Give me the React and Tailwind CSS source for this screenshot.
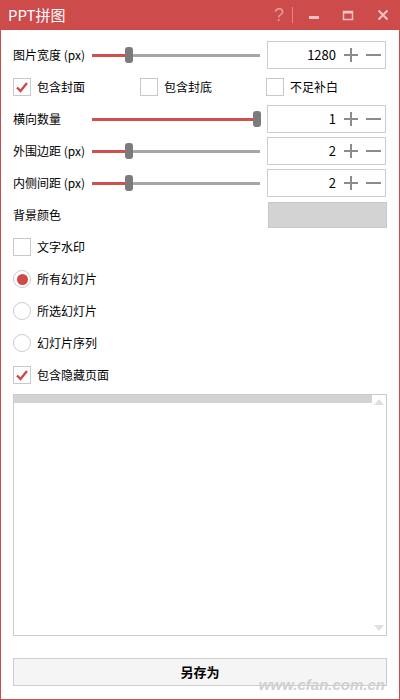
import React from "react";

function Slider({ pct }) {
  return (
    <div className="relative h-[18px] w-[168px] flex items-center">
      <div className="h-[3px] bg-[#d05050]" style={{ width: `${pct}%` }} />
      <div className="h-[3px] flex-1 bg-[#a6a6a6]" />
      <div
        className="absolute top-[1px] h-[16px] w-[8px] rounded-[3px] bg-[#7b7b7b]"
        style={{ left: `calc(${pct}% - 4px)` }}
      />
    </div>
  );
}

function NumBox({ value }) {
  return (
    <div className="flex h-[28px] w-[119px] items-center border border-[#cccccc] bg-white">
      <span className="flex-1 pr-[7px] text-right text-[13px] text-black">{value}</span>
      <svg width="16" height="16" viewBox="0 0 16 16" className="mr-[6px]">
        <rect x="7" y="1" width="2" height="14" fill="#8c8c8c" />
        <rect x="1" y="7" width="14" height="2" fill="#8c8c8c" />
      </svg>
      <svg width="16" height="16" viewBox="0 0 16 16" className="mr-[4px]">
        <rect x="1" y="7" width="15" height="2" fill="#8c8c8c" />
      </svg>
    </div>
  );
}

function SliderRow({ label, pct, value }) {
  return (
    <div className="flex h-[32px] items-center">
      <div className="w-[79px] text-[12px] text-black whitespace-nowrap">{label}</div>
      <Slider pct={pct} />
      <div className="ml-[7px]">
        <NumBox value={value} />
      </div>
    </div>
  );
}

function Check({ checked, label }) {
  return (
    <div className="flex items-center">
      <div className="flex h-[18px] w-[18px] items-center justify-center border border-[#c8c8c8] bg-white">
        {checked && (
          <svg width="14" height="14" viewBox="0 0 14 14">
            <path d="M2 7.5 L5.5 11 L12 3" stroke="#d04848" strokeWidth="2.4" fill="none" />
          </svg>
        )}
      </div>
      <span className="ml-[6px] text-[12px] text-black">{label}</span>
    </div>
  );
}

function Radio({ checked, label }) {
  return (
    <div className="flex h-[32px] items-center">
      <div className="flex h-[18px] w-[18px] items-center justify-center rounded-full border border-[#cccccc] bg-white">
        {checked && <div className="h-[11px] w-[11px] rounded-full bg-[#d04848]" />}
      </div>
      <span className="ml-[6px] text-[12px] text-black">{label}</span>
    </div>
  );
}

export default function App() {
  return (
    <div
      className="flex h-[700px] w-[400px] flex-col bg-white border-x border-b border-[#cd4b4b]"
      style={{ fontFamily: '"Noto Sans CJK SC", "Noto Sans", sans-serif' }}
    >
      {/* title bar */}
      <div className="-mx-px flex h-[30px] items-center bg-[#cd4b4b] pl-[8px]">
        <span className="text-[15px] text-white">PPT拼图</span>
        <div className="ml-auto flex items-center">
          <span className="text-[18px] leading-none text-[#e79a9a]" style={{ fontFamily: '"Liberation Sans", sans-serif' }}>?</span>
          <div className="ml-[8px] h-[16px] w-px bg-[#e08585]" />
          <svg width="12" height="12" viewBox="0 0 12 12" className="ml-[15px]">
            <rect x="1" y="7" width="10" height="3" fill="#f0c4c4" />
          </svg>
          <svg width="12" height="12" viewBox="0 0 12 12" className="ml-[22px]">
            <rect x="1.5" y="2.5" width="9" height="8" fill="none" stroke="#f0c4c4" strokeWidth="1.5" />
            <rect x="1" y="2" width="10" height="2.5" fill="#f0c4c4" />
          </svg>
          <svg width="12" height="12" viewBox="0 0 12 12" className="ml-[23px] mr-[11px]">
            <path d="M1.5 1.5 L10.5 10.5 M10.5 1.5 L1.5 10.5" stroke="#f0c4c4" strokeWidth="2" />
          </svg>
        </div>
      </div>

      <div className="flex flex-1 flex-col px-[12px] pt-[9px]">
        <SliderRow label="图片宽度 (px)" pct={22} value="1280" />
        <div className="flex h-[32px] items-center">
          <div className="w-[127px]"><Check checked label="包含封面" /></div>
          <div className="w-[126px]"><Check label="包含封底" /></div>
          <Check label="不足补白" />
        </div>
        <SliderRow label="横向数量" pct={98} value="1" />
        <SliderRow label="外围边距 (px)" pct={22} value="2" />
        <SliderRow label="内侧间距 (px)" pct={22} value="2" />
        <div className="flex h-[32px] items-center">
          <div className="text-[12px] text-black">背景颜色</div>
          <div className="ml-auto h-[26px] w-[119px] border border-[#c8c8c8] bg-[#d3d3d3]" />
        </div>
        <div className="flex h-[32px] items-center">
          <Check label="文字水印" />
        </div>
        <Radio checked label="所有幻灯片" />
        <Radio label="所选幻灯片" />
        <Radio label="幻灯片序列" />
        <div className="flex h-[32px] items-center">
          <Check checked label="包含隐藏页面" />
        </div>

        <div className="mt-[3px] flex h-[242px] border border-[#cccccc] bg-white">
          <div className="flex-1">
            <div className="h-[8px] bg-[#d3d3d3]" />
          </div>
          <div className="flex w-[14px] flex-col items-center justify-between py-[4px]">
            <svg width="10" height="6" viewBox="0 0 10 6"><path d="M0 6 L5 0 L10 6 Z" fill="#e0e0e0" /></svg>
            <svg width="10" height="6" viewBox="0 0 10 6"><path d="M0 0 L5 6 L10 0 Z" fill="#e0e0e0" /></svg>
          </div>
        </div>

        <div className="mt-[22px] flex h-[28px] items-center justify-center border border-[#cccccc] bg-[#f5f5f5]">
          <span className="text-[13px] font-bold text-black">另存为</span>
        </div>
        <div className="mt-[-12px] flex justify-end pr-[2px]">
          <span className="text-[15px] italic font-bold text-[#d0d0d0]" style={{ fontFamily: '"Liberation Sans", sans-serif' }}>www.cfan.com.cn</span>
        </div>
      </div>
    </div>
  );
}
